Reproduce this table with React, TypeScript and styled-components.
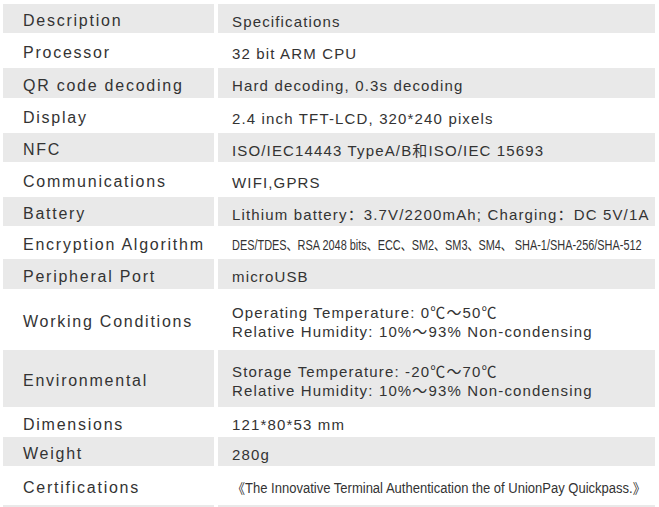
import styled, { createGlobalStyle } from "styled-components";

const Global = createGlobalStyle`
  html, body {
    margin: 0;
    padding: 0;
    background: #ffffff;
  }
`;

const Table = styled.div`
  display: flex;
  flex-direction: column;
  width: 652px;
  padding: 4px 0 0 3px;
  font-family: "Liberation Sans", Arial, "Noto Sans CJK SC", sans-serif;
  color: #333333;
`;

const Row = styled.div<{ $h: number }>`
  display: grid;
  grid-template-columns: 211px 437px;
  column-gap: 4px;
  height: ${({ $h }) => $h}px;
`;

const Cell = styled.div<{ $shade: boolean }>`
  display: flex;
  align-items: center;
  padding-top: 5px;
  box-sizing: border-box;
  overflow: hidden;
  white-space: nowrap;
  background: ${({ $shade }) => ($shade ? "#e9e9e9" : "#ffffff")};
`;

const Label = styled(Cell)`
  padding-left: 20px;
  font-size: 16px;
  letter-spacing: 1.75px;
`;

const Value = styled(Cell)`
  padding-left: 14px;
  font-size: 15px;
  letter-spacing: 1.15px;
  line-height: 19px;
`;

const Lines = styled.div`
  display: flex;
  flex-direction: column;
`;

const Narrow = styled.span<{ $scale: number }>`
  display: inline-block;
  font-size: 14px;
  letter-spacing: 0;
  transform: scaleX(${({ $scale }) => $scale});
  transform-origin: left center;
`;

type Spec = { label: string; value: string[]; h: number; scale?: number };

const specs: Spec[] = [
  { label: "Description", value: ["Specifications"], h: 29 },
  { label: "Processor", value: ["32 bit ARM CPU"], h: 35 },
  { label: "QR code decoding", value: ["Hard decoding, 0.3s decoding"], h: 30 },
  { label: "Display", value: ["2.4 inch TFT-LCD, 320*240 pixels"], h: 35 },
  { label: "NFC", value: ["ISO/IEC14443 TypeA/B和ISO/IEC 15693"], h: 29 },
  { label: "Communications", value: ["WIFI,GPRS"], h: 35 },
  { label: "Battery", value: ["Lithium battery：3.7V/2200mAh; Charging：DC 5V/1A"], h: 29 },
  {
    label: "Encryption Algorithm",
    value: ["DES/TDES、RSA 2048 bits、ECC、SM2、SM3、SM4、 SHA-1/SHA-256/SHA-512"],
    h: 33,
    scale: 0.78,
  },
  { label: "Peripheral Port", value: ["microUSB"], h: 30 },
  {
    label: "Working Conditions",
    value: ["Operating Temperature: 0℃～50℃", "Relative Humidity: 10%～93% Non-condensing"],
    h: 61,
  },
  {
    label: "Environmental",
    value: ["Storage Temperature: -20℃～70℃", "Relative Humidity: 10%～93% Non-condensing"],
    h: 57,
  },
  { label: "Dimensions", value: ["121*80*53 mm"], h: 30 },
  { label: "Weight", value: ["280g"], h: 29 },
  {
    label: "Certifications",
    value: ["《The Innovative Terminal Authentication the of UnionPay Quickpass.》"],
    h: 39,
    scale: 0.93,
  },
  { label: "", value: [""], h: 8 },
];

export default function App() {
  return (
    <>
      <Global />
      <Table>
        {specs.map((s, i) => {
          const shade = i % 2 === 0;
          return (
            <Row key={i} $h={s.h}>
              <Label $shade={shade}>{s.label}</Label>
              <Value $shade={shade}>
                {s.scale ? (
                  <Narrow $scale={s.scale}>{s.value[0]}</Narrow>
                ) : (
                  <Lines>
                    {s.value.map((v, j) => (
                      <span key={j}>{v}</span>
                    ))}
                  </Lines>
                )}
              </Value>
            </Row>
          );
        })}
      </Table>
    </>
  );
}
